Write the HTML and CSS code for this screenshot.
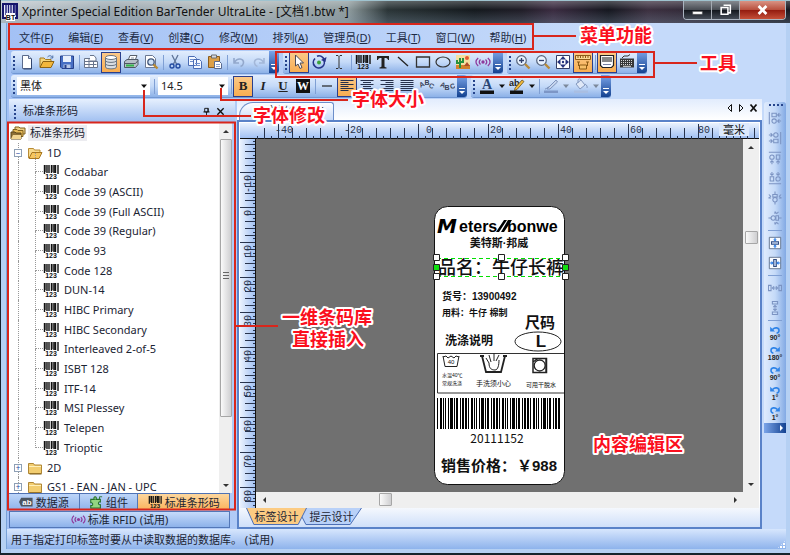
FILE: index.html
```html
<!DOCTYPE html>
<html lang="zh-CN">
<head>
<meta charset="utf-8">
<title>Xprinter Special Edition BarTender UltraLite</title>
<link rel="stylesheet" href="styles.css">
</head>
<body>
<svg class="defs" aria-hidden="true">
  <defs>
    <symbol id="barcode" viewBox="0 0 16 16"><path d="M1.500 1v9M4 1v8M6 1v8M8.500 1v8M11 1v8M12.500 1v8M15 1v9" stroke="#111" stroke-width="1.400"/><path d="M2.700 1v7M9.800 1v7" stroke="#111" stroke-width=".7"/><text x="8" y="15" text-anchor="middle" class="digits">123</text></symbol>
    <symbol id="new" viewBox="0 0 16 16"><path d="M3.500 1.500h6l3 3v10h-9z" fill="#fff" stroke="#5a6a8c"/><path d="M9.500 1.500v3h3" fill="#cfdcf2" stroke="#5a6a8c"/><path d="M12.500 5v10h-8" fill="none" stroke="#31456e"/></symbol>
    <symbol id="open" viewBox="0 0 16 16"><path d="M1 13V4h4l1.500 1.500H12V8" fill="#f6d67c" stroke="#a67a1c"/><path d="M1 13.500 4 7.500h11l-3 6z" fill="#f3b73c" stroke="#8d6414"/><path d="M8.500 3c2-2 4-1.500 5 .5m.3-2v2.500h-2.500" fill="none" stroke="#4c6fa8"/></symbol>
    <symbol id="save" viewBox="0 0 16 16"><path d="M1.500 2h13v12.500H3L1.500 13z" fill="#476fc4" stroke="#27408b"/><path d="M4 2h8v6H4z" fill="#e9f0fc"/><path d="M4.500 10.500h7V14h-7z" fill="#b9c8e6"/><path d="M5.500 11h2v3h-2z" fill="#26408a"/></symbol>
    <symbol id="grid" viewBox="0 0 16 16"><path d="M1.500 4.500h9v9h-9zM1.500 7.500h12M1.500 10.500h12M6 4.500v9M10.500 7.500h4v6h-4z" fill="#fff" stroke="#68758c"/><path d="M7 1.500h4l2 2.500v3H7" fill="#fff" stroke="#68758c"/></symbol>
    <symbol id="db" viewBox="0 0 16 16"><path d="M2.500 3.500v9.500c0 2.500 11 2.500 11 0V3.500" fill="#d8dde2" stroke="#697480"/><ellipse cx="8" cy="3.500" rx="5.500" ry="2" fill="#fff" stroke="#697480"/><path d="M2.500 6.500c0 2.500 11 2.500 11 0M2.500 9.700c0 2.500 11 2.500 11 0" fill="none" stroke="#697480"/></symbol>
    <symbol id="print" viewBox="0 0 16 16"><path d="M5 6.500 7 1.500h7l-2 5z" fill="#fff" stroke="#59606b"/><path d="M1.500 7.500 4 5.500h11v5l-2.500 3h-11z" fill="#b9c0ca" stroke="#4f5865"/><path d="M1.500 9.500h11l2.500-3" fill="none" stroke="#4f5865"/><path d="M3 11.500h8" stroke="#33b649" stroke-width="2"/><path d="M8 4h3" stroke="#8a93a1"/></symbol>
    <symbol id="preview" viewBox="0 0 16 16"><path d="M2.500 1.500h7l3 3v9h-10z" fill="#fff" stroke="#6b7892"/><circle cx="8" cy="8" r="3.200" fill="#cfe2f7" stroke="#44587c" stroke-width="1.300"/><path d="m10.500 10.500 4 4" stroke="#b98a33" stroke-width="2.400"/></symbol>
    <symbol id="cut" viewBox="0 0 16 16"><path d="m5 1 4.500 9M11 1 6.500 10" stroke="#5e7498" stroke-width="1.300"/><circle cx="5" cy="12" r="2" fill="none" stroke="#234ba0" stroke-width="1.400"/><circle cx="11" cy="12" r="2" fill="none" stroke="#234ba0" stroke-width="1.400"/></symbol>
    <symbol id="copy" viewBox="0 0 16 16"><path d="M1.500 2.500h6l2 2v7h-8zM6.500 5.500h6l2 2v7h-8z" fill="#f4f8ff" stroke="#4a6cb4"/><path d="M3 5.500h3M3 7.500h3M8 9.500h5M8 11.500h5" stroke="#6f8fce"/></symbol>
    <symbol id="paste" viewBox="0 0 16 16"><path d="M1.500 2.500h11v11h-11z" fill="#dca048" stroke="#8b5c1c"/><path d="M4.500 1h5v3h-5z" fill="#d6d9df" stroke="#6c6c6c"/><path d="M7.500 7.500h5l2 2v5h-7z" fill="#fff" stroke="#596a90"/><path d="M9 10.500h4M9 12.500h4" stroke="#8ea3cc"/></symbol>
    <symbol id="undo" viewBox="0 0 16 16"><path d="M3 4v5h5M3.500 8.500C6 3.500 13 4 12.500 9c-.3 2-1.500 3-3 3.500" fill="none" stroke="#93a8cc" stroke-width="1.600"/></symbol>
    <symbol id="redo" viewBox="0 0 16 16"><path d="M13 4v5H8M12.500 8.500C10 3.500 3 4 3.500 9c.3 2 1.500 3 3 3.500" fill="none" stroke="#a3b7d8" stroke-width="1.600"/></symbol>
    <symbol id="arrow" viewBox="0 0 16 16"><path d="m4.500 1 8 8H9l2 4.500-2 1L7 10l-2.500 2z" fill="#fff" stroke="#4b4b57"/></symbol>
    <symbol id="rotate" viewBox="0 0 16 16"><path d="M4 4.500A5.500 5.500 0 1 0 12.500 5.500" fill="none" stroke="#26358b" stroke-width="1.700"/><path d="M6 2.200C9 .8 12 3 13.500 6" fill="none" stroke="#26358b" stroke-width="1.700"/><path d="m15.500 3-1 5-4.500-2z" fill="#26358b"/><circle cx="8" cy="8.500" r="2" fill="#3aa33c"/></symbol>
    <symbol id="ibeam" viewBox="0 0 16 16"><path d="M5 1.500h2l1 1 1-1h2M8 2.500v11M5 14.500h2l1-1 1 1h2" fill="none" stroke="#333"/></symbol>
    <symbol id="text" viewBox="0 0 16 16"><path d="M2 2h12v4h-1c-.4-1.600-1-2-3.500-2V12c0 1 .5 1.300 2 1.500v1h-7v-1c1.500-.2 2-.5 2-1.500V4C4 4 3.400 4.400 3 6H2z" fill="#222"/></symbol>
    <symbol id="line" viewBox="0 0 16 16"><path d="m3 3 10 9" stroke="#222" stroke-width="1.300"/></symbol>
    <symbol id="rect" viewBox="0 0 16 16"><path d="M1.500 3h13v10h-13z" fill="none" stroke="#333" stroke-width="1.300"/></symbol>
    <symbol id="ellipse" viewBox="0 0 16 16"><ellipse cx="8" cy="8" rx="7" ry="5" fill="none" stroke="#333" stroke-width="1.200"/></symbol>
    <symbol id="picture" viewBox="0 0 16 16"><path d="M1 1h14v14H1z" fill="#f6dfa0"/><path d="M1 11h14v4H1z" fill="#d4812d"/><path d="M5 14V4M2 6v3h3M8 4v4H5" stroke="#28913e" stroke-width="2" fill="none"/><path d="m9 12 3-4 3 4z" fill="#b14b28"/><circle cx="12" cy="4" r="2" fill="#e65a30"/></symbol>
    <symbol id="rfid" viewBox="0 0 16 16"><circle cx="8" cy="8" r="1.700" fill="#8e3a9d"/><path d="M5.500 5.500c-1.500 1.500-1.500 3.500 0 5M3.200 4c-3 2.500-3 5.500 0 8M10.500 5.500c1.500 1.500 1.500 3.500 0 5M12.800 4c3 2.500 3 5.500 0 8" fill="none" stroke="#8e3a9d" stroke-width="1.300"/></symbol>
    <symbol id="zoomin" viewBox="0 0 16 16"><circle cx="6.500" cy="6.500" r="4.800" fill="#eaf3ff" stroke="#56647c" stroke-width="1.200"/><path d="m10 10 4.500 4.500" stroke="#b88a39" stroke-width="2.400"/><path d="M4 6.500h5M6.500 4v5" stroke="#31406b" stroke-width="1.300"/></symbol>
    <symbol id="zoomout" viewBox="0 0 16 16"><circle cx="6.500" cy="6.500" r="4.800" fill="#eaf3ff" stroke="#56647c" stroke-width="1.200"/><path d="m10 10 4.500 4.500" stroke="#b88a39" stroke-width="2.400"/><path d="M4 6.500h5" stroke="#31406b" stroke-width="1.300"/></symbol>
    <symbol id="fit" viewBox="0 0 16 16"><path d="M1.500 1.500h13v13h-13z" fill="#fff" stroke="#333d66"/><path d="m8 2 3 3.500H5zM8 14l3-3.500H5zM2 8l3.500-3v6zM14 8l-3.500-3v6z" fill="#27357d"/><circle cx="8" cy="8" r="1.200" fill="#27357d"/></symbol>
    <symbol id="ruler" viewBox="0 0 16 16"><path d="M.5 1.500h15v4H.5z" fill="#fbd894" stroke="#8c5a15"/><path d="M3 2v2M5.500 2v2M8 2v2M10.500 2v2M13 2v2" stroke="#8c5a15"/><path d="M3.500 8v4M12.500 8v4M2 8h3M11 8h3" stroke="#8c5a15"/><path d="M4.500 11h7v4h-7z" fill="#f6bf69" stroke="#8c5a15"/></symbol>
    <symbol id="screen" viewBox="0 0 16 16"><path d="M1.500 1.500h13v10l-2 2h-9l-2-2z" fill="#fff" stroke="#222" stroke-width="1.200"/><path d="M4 3v5M6 3v5M8 3v5M10 3v5M12 3v5" stroke="#111"/><path d="M4 10.500h8" stroke="#7781a3"/></symbol>
    <symbol id="keyboard" viewBox="0 0 16 16"><path d="m3 4 2-2h4l2-1.500" fill="none" stroke="#333"/><path d="M1 4.500h14v9H1z" fill="#383838"/><path d="M2 6.500h12M2 8.500h12M2 10.500h12" stroke="#d8d8d8" stroke-dasharray="1 1"/><path d="M4 12.300h8" stroke="#ddd"/></symbol>
    <symbol id="dash" viewBox="0 0 16 16"><path d="M3 8h10" stroke="#222" stroke-width="1.200"/></symbol>
    <symbol id="left" viewBox="0 0 16 16"><path d="M1.500 2.500h13M1.500 4.500h8M1.500 6.500h13M1.500 8.500h8M1.500 10.500h13M1.500 12.500h8" stroke="#26314c"/></symbol>
    <symbol id="center" viewBox="0 0 16 16"><path d="M1.500 2.500h13M4 4.500h8M1.500 6.500h13M4 8.500h8M1.500 10.500h13M4 12.500h8" stroke="#26314c"/></symbol>
    <symbol id="right" viewBox="0 0 16 16"><path d="M1.500 2.500h13M6.500 4.500h8M1.500 6.500h13M6.500 8.500h8M1.500 10.500h13M6.500 12.500h8" stroke="#26314c"/></symbol>
    <symbol id="justify" viewBox="0 0 16 16"><path d="M1.500 2.500h13M1.500 4.500h13M1.500 6.500h13M1.500 8.500h13M1.500 10.500h13M1.500 12.500h13" stroke="#26314c"/></symbol>
    <symbol id="arcup" viewBox="0 0 16 16"><text x="1" y="9" transform="rotate(-25 3 8)" class="arc">A</text><text x="5.500" y="7" class="arc">B</text><text x="10" y="10" transform="rotate(25 12 8)" class="arc">C</text></symbol>
    <symbol id="arcdown" viewBox="0 0 16 16"><text x="1" y="9" transform="rotate(20 3 8)" class="arc">A</text><text x="5.500" y="12" class="arc">B</text><text x="11" y="11" transform="rotate(-20 12 8)" class="arc">C</text></symbol>
    <symbol id="fontcolor" viewBox="0 0 16 16"><text x="8" y="11" text-anchor="middle" class="letter">A</text><path d="M1 12.500h14V16H1z" fill="#111"/></symbol>
    <symbol id="highlight" viewBox="0 0 16 16"><text x="0" y="8" class="abc">ab</text><path d="m6 10 7-8 2 1.500-7 8-2.500 1z" fill="#f3bb3c" stroke="#6b5320" stroke-width=".8"/><path d="M1 12.500h13V16H1z" fill="#111"/></symbol>
    <symbol id="linecolor" viewBox="0 0 16 16"><path d="M4 11 13 2l1.500 2L7 11z" fill="#c8d6ee" stroke="#7e94bd"/><path d="M2 11c2 0 2-2 4-2" stroke="#7e94bd" fill="none"/><path d="M1 12.500h14V15H1z" fill="#7d96c6"/></symbol>
    <symbol id="fill" viewBox="0 0 16 16"><path d="m3 6 5-4 4 5-5 4z" fill="#dfe8f7" stroke="#8398bf"/><path d="M5 5V2c0-1.500 3-1.500 3 0M12 6c2 1 2.500 3 2 4" fill="none" stroke="#8398bf"/><path d="M1 12.500h14V15H1z" fill="#a9bee2"/></symbol>
    <symbol id="folders" viewBox="0 0 16 16"><path d="M5 2h4l1 1h5v6H5z" fill="#eed086" stroke="#80611e"/><path d="M3 4.500h4l1 1h5v6H3z" fill="#e5b957" stroke="#80611e"/><path d="M1 7h4l1 1h5v6H1z" fill="#8d6f36" stroke="#5f4719"/><path d="m1 14 2-4h8v4z" fill="#f2d592"/></symbol>
    <symbol id="fopen" viewBox="0 0 16 16"><path d="M1.500 13V3.500h5l1 1.500H13v3" fill="#f7da8d" stroke="#b98b34"/><path d="m2 13.500 3-6h10l-3 6z" fill="#f6c65e" stroke="#a87820"/></symbol>
    <symbol id="folder" viewBox="0 0 16 16"><path d="M1.500 13.500v-10h5l1 1.500h7v8.500z" fill="#f2cd70" stroke="#b08735"/><path d="M2 6.500h12" stroke="#fff0ba"/><path d="M2.500 14h12" stroke="#7e5e1d"/></symbol>
    <symbol id="source" viewBox="0 0 16 16"><path d="M0 8 2.500 3h13v10h-13z" fill="#4b5560"/><text x="9" y="11" text-anchor="middle" class="ab">ab</text></symbol>
    <symbol id="component" viewBox="0 0 16 16"><path d="M2 5h4c-2-4 4-4 2 0h5v3c-3-1-3 4 0 3v4H2v-3c3 1 3-4 0-3z" fill="#93d580" stroke="#25702c" stroke-width="1.200"/><path d="M12 5V2h3" fill="none" stroke="#25702c"/></symbol>
    <symbol id="al" viewBox="0 0 16 16"><path d="M1.500 1v14M4.500 2.500h5v4h-5zM11 4.500h4m-2-2-2 2 2 2M11 11.500h4m-2-2-2 2 2 2" fill="none" stroke="#7b93c2" stroke-width="1.200"/><circle cx="7" cy="11.500" r="2.500" fill="none" stroke="#7b93c2" stroke-width="1.200"/></symbol>
    <symbol id="cross" viewBox="0 0 16 16"><path d="M8 .5v3M8 12.500v3M.5 8h3M12.500 8h3M5.500 4h5v3h-5z" fill="none" stroke="#7b93c2" stroke-width="1.200"/><circle cx="8" cy="10" r="2.500" fill="none" stroke="#7b93c2" stroke-width="1.200"/><path d="m1 4 2 2-2 2M15 4l-2 2 2 2" fill="none" stroke="#7b93c2" stroke-width="1.200"/></symbol>
    <symbol id="pagev" viewBox="0 0 16 16"><path d="M1.500 1.500h13v13h-13z" fill="#f8fbff" stroke="#596b87"/><path d="M4 6.500h8v3H4z" fill="#bed0ed" stroke="#334e82" stroke-width="1.200"/><path d="M8 2v3M8 11v3M6.500 4 8 5.500 9.500 4M6.500 12 8 10.500 9.500 12" fill="none" stroke="#267be8" stroke-width="1.200"/></symbol>
    <symbol id="dist" viewBox="0 0 16 16"><path d="M.5 5h3v6h-3zM12.500 5h3v6h-3zM5 8h6M7 6 5 8l2 2M9 6l2 2-2 2" fill="none" stroke="#7b93c2" stroke-width="1.200"/></symbol>
    <symbol id="ccw" viewBox="0 0 14 10"><path d="M1 1v6h6z" fill="#2e83e8"/><path d="M4 4.500C7 1 12 2 12 5.500c0 1.500-1 3-3 3.500" fill="none" stroke="#2e83e8" stroke-width="2"/></symbol>
    <symbol id="triangle" viewBox="0 0 8 8"><path d="M1 2.500h6L4 6z" fill="#111"/></symbol>
    <pattern id="hr" x="178" y="0" width="70" height="16" patternUnits="userSpaceOnUse"><path d="M.5 1v15M14.500 5v11M28.500 5v11M42.500 5v11M56.500 5v11M7.500 13v3M21.500 13v3M35.500 13v3M49.500 13v3M63.500 13v3" stroke="#27334d"/></pattern>
    <pattern id="vr" x="0" y="33" width="16" height="35" patternUnits="userSpaceOnUse"><path d="M0 .5h16M5 7.500h11M5 14.500h11M5 21.500h11M5 28.500h11M13 4.500h3M13 11.500h3M13 18.500h3M13 25.500h3M13 31.500h3" stroke="#27334d"/></pattern>
    <pattern id="bars" width="31" height="31" patternUnits="userSpaceOnUse"><path d="M0 0h2v31H0zM3 0h1v31H3zM6 0h2v31H6zM9 0h1v31H9zM11 0h1v31h-1zM14 0h1v31h-1zM16 0h3v31h-3zM20 0h1v31h-1zM22 0h2v31h-2zM26 0h1v31h-1zM28 0h2v31h-2z"/></pattern>
  </defs>
</svg>

<div class="window">
  <header class="titlebar">
    <svg class="applogo" viewBox="0 0 16 18"><path d="M1 1h14v14H1z" fill="#eef0ff" stroke="#15156b" stroke-width="2"/><path d="M4 2v10M6.500 2v8M9 2v10M11.500 2v8M13 2v10" stroke="#1b1b76" stroke-width="1.400"/><path d="M4 10h9v8H4z" fill="#fff"/><text x="8.500" y="17" text-anchor="middle" class="digits">BT</text></svg>
    <h1>Xprinter Special Edition BarTender UltraLite - [文档1.btw *]</h1>
    <div class="winbtns">
      <button aria-label="最小化"><svg viewBox="0 0 28 18"><path d="M9 10.500h10v3H9z" fill="#fff" stroke="#555" stroke-width=".5"/></svg></button>
      <button aria-label="还原"><svg viewBox="0 0 28 18"><path d="M12 4h7v8h-2M9.500 6.500h7v7h-7z" fill="none" stroke="#fff" stroke-width="1.600"/></svg></button>
      <button class="close" aria-label="关闭"><svg viewBox="0 0 46 18"><path d="m19 5 8 8m0-8-8 8" stroke="#fff" stroke-width="2.800"/></svg></button>
    </div>
  </header>

  <div class="frame">
    <nav class="menu">
      <a href="#">文件(<u>F</u>)</a><a href="#">编辑(<u>E</u>)</a><a href="#">查看(<u>V</u>)</a><a href="#">创建(<u>C</u>)</a><a href="#">修改(<u>M</u>)</a><a href="#">排列(<u>A</u>)</a><a href="#">管理员(<u>D</u>)</a><a href="#">工具(<u>T</u>)</a><a href="#">窗口(<u>W</u>)</a><a href="#">帮助(<u>H</u>)</a>
    </nav>

    <div class="barrow">
      <div class="bar"><i class="grip"></i>
        <button class="tb" aria-label="新建"><svg><use href="#new"/></svg></button><button class="tb" aria-label="打开"><svg><use href="#open"/></svg></button><button class="tb" aria-label="保存"><svg><use href="#save"/></svg></button><i class="sep"></i>
        <button class="tb" aria-label="页面设置"><svg><use href="#grid"/></svg></button><button class="tb on" aria-label="数据库"><svg><use href="#db"/></svg></button><button class="tb" aria-label="打印"><svg><use href="#print"/></svg></button><button class="tb" aria-label="预览"><svg><use href="#preview"/></svg></button><i class="sep"></i>
        <button class="tb" aria-label="剪切"><svg><use href="#cut"/></svg></button><button class="tb" aria-label="复制"><svg><use href="#copy"/></svg></button><button class="tb" aria-label="粘贴"><svg><use href="#paste"/></svg></button><i class="sep"></i>
        <button class="tb" aria-label="撤消"><svg><use href="#undo"/></svg></button><button class="tb" aria-label="重做"><svg><use href="#redo"/></svg></button><i class="more"></i>
      </div>
      <div class="bar"><i class="grip"></i>
        <button class="tb on" aria-label="选择"><svg><use href="#arrow"/></svg></button><button class="tb" aria-label="旋转"><svg><use href="#rotate"/></svg></button><button class="tb" aria-label="文本光标"><svg><use href="#ibeam"/></svg></button><i class="sep"></i>
        <button class="tb" aria-label="条形码"><svg><use href="#barcode"/></svg></button><button class="tb" aria-label="文本"><svg><use href="#text"/></svg></button><button class="tb" aria-label="线条"><svg><use href="#line"/></svg></button><button class="tb" aria-label="矩形"><svg><use href="#rect"/></svg></button><button class="tb" aria-label="椭圆"><svg><use href="#ellipse"/></svg></button><button class="tb" aria-label="图片"><svg><use href="#picture"/></svg></button><button class="tb" aria-label="RFID"><svg><use href="#rfid"/></svg></button><i class="more"></i>
      </div>
      <div class="bar"><i class="grip"></i>
        <button class="tb" aria-label="放大"><svg><use href="#zoomin"/></svg></button><button class="tb" aria-label="缩小"><svg><use href="#zoomout"/></svg></button><button class="tb" aria-label="适合窗口"><svg><use href="#fit"/></svg></button><button class="tb on" aria-label="标尺"><svg><use href="#ruler"/></svg></button><i class="sep"></i>
        <button class="tb on" aria-label="屏幕数据"><svg><use href="#screen"/></svg></button><button class="tb" aria-label="键盘"><svg><use href="#keyboard"/></svg></button><i class="more"></i>
      </div>
    </div>

    <div class="barrow">
      <div class="bar"><i class="grip"></i>
        <label class="combo font"><select aria-label="字体"><option>黑体</option></select><svg><use href="#triangle"/></svg></label><i class="sep"></i>
        <label class="combo size"><select aria-label="字号"><option>14.5</option></select><svg><use href="#triangle"/></svg></label><i class="sep"></i>
        <button class="tb on fmt"><b>B</b></button><button class="tb fmt"><em>I</em></button><button class="tb fmt"><u>U</u></button><button class="tb fmt"><span class="inv">W</span></button><i class="sep"></i>
        <button class="tb" aria-label="横线"><svg><use href="#dash"/></svg></button><button class="tb on" aria-label="左对齐"><svg><use href="#left"/></svg></button><button class="tb" aria-label="居中"><svg><use href="#center"/></svg></button><button class="tb" aria-label="右对齐"><svg><use href="#right"/></svg></button><button class="tb" aria-label="两端对齐"><svg><use href="#justify"/></svg></button><button class="tb" aria-label="上弧文字"><svg><use href="#arcup"/></svg></button><button class="tb" aria-label="下弧文字"><svg><use href="#arcdown"/></svg></button><i class="more"></i>
      </div>
      <div class="bar"><i class="grip"></i>
        <button class="tb" aria-label="字体颜色"><svg><use href="#fontcolor"/></svg></button><button class="dd" aria-label="更多字体颜色"><svg><use href="#triangle"/></svg></button>
        <button class="tb" aria-label="突出显示"><svg><use href="#highlight"/></svg></button><button class="dd" aria-label="更多突出颜色"><svg><use href="#triangle"/></svg></button><i class="sep"></i>
        <button class="tb" aria-label="线条颜色"><svg><use href="#linecolor"/></svg></button><button class="dd off" aria-label="更多线条颜色"><svg><use href="#triangle"/></svg></button>
        <button class="tb" aria-label="填充颜色"><svg><use href="#fill"/></svg></button><button class="dd off" aria-label="更多填充颜色"><svg><use href="#triangle"/></svg></button><i class="more"></i>
      </div>
    </div>

    <main class="work">
      <aside class="side">
        <div class="sidehead"><i class="grip"></i><h2>标准条形码</h2>
          <svg class="pin" viewBox="0 0 10 10"><path d="M3 1.500h4v4H3zM1.500 5.500h7M5 5.500V10M6.500 1.500v4" fill="none" stroke="#111"/></svg>
          <svg class="x" viewBox="0 0 10 10"><path d="m1.500 1.500 7 7m0-7-7 7" stroke="#111" stroke-width="1.500"/></svg>
        </div>
        <div class="treebox">
          <ul class="tree">
            <li class="root"><svg><use href="#folders"/></svg><span>标准条形码</span></li>
            <li class="group"><i class="pm">−</i><svg><use href="#fopen"/></svg><span>1D</span></li>
            <li class="leaf"><svg><use href="#barcode"/></svg><span>Codabar</span></li>
            <li class="leaf"><svg><use href="#barcode"/></svg><span>Code 39 (ASCII)</span></li>
            <li class="leaf"><svg><use href="#barcode"/></svg><span>Code 39 (Full ASCII)</span></li>
            <li class="leaf"><svg><use href="#barcode"/></svg><span>Code 39 (Regular)</span></li>
            <li class="leaf"><svg><use href="#barcode"/></svg><span>Code 93</span></li>
            <li class="leaf"><svg><use href="#barcode"/></svg><span>Code 128</span></li>
            <li class="leaf"><svg><use href="#barcode"/></svg><span>DUN-14</span></li>
            <li class="leaf"><svg><use href="#barcode"/></svg><span>HIBC Primary</span></li>
            <li class="leaf"><svg><use href="#barcode"/></svg><span>HIBC Secondary</span></li>
            <li class="leaf"><svg><use href="#barcode"/></svg><span>Interleaved 2-of-5</span></li>
            <li class="leaf"><svg><use href="#barcode"/></svg><span>ISBT 128</span></li>
            <li class="leaf"><svg><use href="#barcode"/></svg><span>ITF-14</span></li>
            <li class="leaf"><svg><use href="#barcode"/></svg><span>MSI Plessey</span></li>
            <li class="leaf"><svg><use href="#barcode"/></svg><span>Telepen</span></li>
            <li class="leaf"><svg><use href="#barcode"/></svg><span>Trioptic</span></li>
            <li class="group"><i class="pm">+</i><svg><use href="#folder"/></svg><span>2D</span></li>
            <li class="group"><i class="pm">+</i><svg><use href="#folder"/></svg><span>GS1 - EAN - JAN - UPC</span></li>
          </ul>
          <div class="vscroll treescroll"><i class="ar up"></i><i class="thumb"></i><i class="ar down"></i></div>
        </div>
        <div class="sidetabs">
          <button><svg><use href="#source"/></svg>数据源</button><button><svg><use href="#component"/></svg>组件</button><button class="cur"><svg><use href="#barcode"/></svg>标准条形码</button>
        </div>
        <button class="rfid"><svg><use href="#rfid"/></svg>标准 RFID (试用)</button>
      </aside>

      <section class="docs">
        <div class="doctabs">
          <div class="doctab"><span>文档1.btw *</span></div>
          <svg class="docnav" viewBox="0 0 32 10"><path d="M5.500 1.500v7L2 5z" fill="none" stroke="#111"/><path d="M13.500 1.500v7L17 5z" fill="none" stroke="#111"/><path d="m24.500 1.500 6 7m0-7-6 7" stroke="#111" stroke-width="1.800"/></svg>
        </div>
        <div class="doc">
          <div class="hruler">
            <svg><rect x="16" width="100%" height="16" fill="url(#hr)"/><text x="53" y="10" text-anchor="end">-40</text><text x="122" y="10" text-anchor="end">-20</text><text x="192" y="10" text-anchor="end">0</text><text x="262" y="10" text-anchor="end">20</text><text x="332" y="10" text-anchor="end">40</text><text x="402" y="10" text-anchor="end">60</text><text x="470" y="10" text-anchor="end">80</text></svg>
            <span>毫米</span>
          </div>
          <div class="docmid">
            <div class="vruler"><svg><rect width="16" height="100%" fill="url(#vr)"/><g text-anchor="end"><text transform="translate(11 36) rotate(-90)">-10</text><text transform="translate(11 71) rotate(-90)">0</text><text transform="translate(11 106) rotate(-90)">10</text><text transform="translate(11 141) rotate(-90)">20</text><text transform="translate(11 176) rotate(-90)">30</text><text transform="translate(11 211) rotate(-90)">40</text><text transform="translate(11 246) rotate(-90)">50</text><text transform="translate(11 281) rotate(-90)">60</text><text transform="translate(11 316) rotate(-90)">70</text><text transform="translate(11 351) rotate(-90)">80</text></g></svg></div>
            <div class="view">
              <div class="canvas">
                <svg class="label" viewBox="430 204 142 284">
                  <rect x="434.500" y="206.500" width="130" height="278" rx="13" fill="#fff" stroke="#111"/>
                  <g class="logo"><text x="437" y="233" class="m">M</text><text x="459" y="232">eters</text><path d="m496 232 8-12h3l-8 12zM501 232l7-12h4l-8 12z"/><text x="507" y="232">bonwe</text></g>
                  <text x="499" y="247" text-anchor="middle" class="t11 bold">美特斯·邦威</text>
                  <text x="438" y="274" class="t17">品名：牛仔长裤</text>
                  <text x="442" y="300" class="t10 bold">货号：13900492</text>
                  <text x="442" y="316" class="t9 bold">用料：牛仔 棉制</text>
                  <text x="525" y="328" class="t15">尺码</text>
                  <text x="445" y="345" class="t12 bold">洗涤说明</text>
                  <ellipse cx="538" cy="341.500" rx="23" ry="9.500" fill="none" stroke="#222"/>
                  <text x="541" y="347" text-anchor="middle" class="el">L</text>
                  <path d="M564 353.500H437.500v39.500H564" fill="none" stroke="#333"/>
                  <g fill="none" stroke="#222"><path d="m443 356 2 10.500h12l2-10.500M443 357l3-1 2 2 3-2 3 2 2-2 3 1"/><path d="m482 356 4 16h15l4-16M480 356h4M503 356h4" stroke-width="1.800"/><path d="M489 363l-3-5m5 4-2-7m5 6v-8m2 8 3-6m-10 8c0 6 3 7 6 7s4-5 4-10"/><path d="M533 358.500h13.500v14H533zM533 362l5-3.500m8 0V372" stroke-width="1.500"/><circle cx="539.700" cy="365.500" r="5.500" stroke-width="1.300"/></g>
                  <text x="451" y="364" text-anchor="middle" class="t6">40</text>
                  <text x="442" y="377" class="t5">水温40℃</text><text x="442" y="385" class="t5">常规洗涤</text>
                  <text x="476" y="386" class="t7">手洗须小心</text><text x="526" y="387" class="t6">可甩干脱水</text>
                  <rect x="436" y="398" width="124" height="31" fill="url(#bars)"/>
                  <text x="497" y="443" text-anchor="middle" class="num">20111152</text>
                  <text x="441" y="471" class="t14 bold">销售价格：</text><text x="517" y="471" class="t14 bold">￥</text><text x="532" y="471" class="t14 bold">988</text>
                  <g fill="none" stroke="#00e000" stroke-dasharray="4 3"><path d="M437 258.500h129M437 276.500h129"/></g>
                  <g fill="#fff" stroke="#222"><path d="M433.500 254.500h6v6h-6zM498.500 254.500h6v6h-6zM562.500 254.500h6v6h-6zM433.500 273.500h6v6h-6zM498.500 273.500h6v6h-6zM562.500 273.500h6v6h-6z"/><path d="M433.500 264.500h6v6h-6zM562.500 264.500h6v6h-6z" fill="#10e010"/></g>
                </svg>
              </div>
              <div class="hscroll"><i class="ar lt"></i><i class="thumb"></i><i class="ar rt"></i></div>
            </div>
            <div class="vscroll docscroll"><i class="ar up"></i><i class="thumb"></i><i class="ar down"></i></div>
          </div>
          <div class="pages"><button class="page cur"><svg viewBox="0 0 62 17" preserveAspectRatio="none"><path d="M.5 0 8 16.500h45L61.500 0" /></svg><span>标签设计</span></button><button class="page"><svg viewBox="0 0 62 17" preserveAspectRatio="none"><path d="M5 0 .5 8 5 16.500h45L61.500 0" /></svg><span>提示设计</span></button></div>
        </div>
      </section>

      <div class="dock">
        <div class="vbar"><i class="hgrip"></i>
          <button class="vb" aria-label="左对齐对象"><svg><use href="#al"/></svg></button>
          <button class="vb" aria-label="右对齐对象"><svg class="r180"><use href="#al"/></svg></button>
          <button class="vb" aria-label="顶对齐对象"><svg class="r90"><use href="#al"/></svg></button>
          <button class="vb" aria-label="底对齐对象"><svg class="r270"><use href="#al"/></svg></button>
          <button class="vb" aria-label="垂直居中"><svg><use href="#cross"/></svg></button>
          <button class="vb" aria-label="水平居中"><svg class="r90"><use href="#cross"/></svg></button><i class="hsep"></i>
          <button class="vb" aria-label="页面垂直居中"><svg><use href="#pagev"/></svg></button>
          <button class="vb" aria-label="页面水平居中"><svg class="r90"><use href="#pagev"/></svg></button><i class="hsep"></i>
          <button class="vb" aria-label="水平分布"><svg><use href="#dist"/></svg></button>
          <button class="vb" aria-label="垂直分布"><svg class="r90"><use href="#dist"/></svg></button><i class="hsep"></i>
          <button class="rot"><svg><use href="#ccw"/></svg>90°</button>
          <button class="rot"><svg class="flip"><use href="#ccw"/></svg>180°</button>
          <button class="rot"><svg class="flip"><use href="#ccw"/></svg>90°</button>
          <button class="rot"><svg><use href="#ccw"/></svg>1°</button>
          <button class="rot"><svg class="flip"><use href="#ccw"/></svg>1°</button>
          <i class="vmore"></i>
        </div>
      </div>
    </main>

    <footer class="status"><span>用于指定打印标签时要从中读取数据的数据库。 (试用)</span><i class="size-grip"></i></footer>
  </div>

  <svg class="notes">
    <g fill="none" stroke="#d8261c" stroke-width="2">
      <path d="M9 24h524v25H9zM533 36h43M276 52h378v25H276zM654 63h43M144 90v26h107M221 88v12h127M8 122.500h227v387H8zM235 326h43"/>
    </g>
    <g class="notetext">
      <text x="580" y="42">菜单功能</text><text x="700" y="70">工具</text><text x="352" y="106">字体大小</text><text x="253" y="122">字体修改</text><text x="282" y="324">一维条码库</text><text x="292" y="346">直接插入</text><text x="593" y="451">内容编辑区</text>
    </g>
  </svg>
</div>
</body>
</html>
```
FILE: styles.css
```css
* { box-sizing: border-box; }
html, body { margin: 0; height: 100%; }
body {
  font: 11px/16px "Noto Sans", "Noto Sans CJK SC", sans-serif;
  color: #1b2433;
  overflow: hidden;
}
button { font: inherit; color: inherit; padding: 0; margin: 0; border: 0; background: none; }
svg { display: block; flex: none; }
i { display: block; font-style: normal; flex: none; }
h1, h2 { margin: 0; font: inherit; }
.defs { position: absolute; width: 0; height: 0; }
.digits { font: bold 7px "Liberation Sans", sans-serif; fill: #111; }
.arc { font: bold 7px "Liberation Sans", sans-serif; fill: #3a4358; }
.letter { font: bold 14px "Liberation Serif", serif; fill: #2a4674; }
.abc { font: bold 9px "Liberation Sans", sans-serif; fill: #222; }
.ab { font: bold 9px "Liberation Sans", sans-serif; fill: #fff; }

.window {
  position: relative;
  display: flex;
  flex-direction: column;
  height: 100vh;
  border-left: 1px solid #16202c;
  border-bottom: 2px solid #16242c;
  background: #b5d0f3;
}

/* title bar */
.titlebar {
  display: flex;
  align-items: center;
  gap: 4px;
  height: 23px;
  flex: none;
  padding-left: 1px;
  border-top: 1px solid #9fc3cf;
  background:
    linear-gradient(rgba(255,255,255,.25), rgba(0,0,0,0) 40%, rgba(120,140,160,.35)),
    linear-gradient(90deg, #c2cbd0, #9eaab2 14%, #b1b9bb 30%, #8f9c9e 44%, #2a3436 49%, #14191d 60%, #201d27 66%, #3a2b40 70%, #15171f 77%, #3c3040 82%, #16171f 100%);
}
.titlebar h1 { flex: 1; font-size: 12px; line-height: 20px; color: #111; white-space: nowrap; }
.applogo { width: 16px; height: 18px; }
.winbtns { display: flex; align-self: flex-start; margin-right: 4px; border: 1px solid #aab4c0; border-top: 0; border-radius: 0 0 4px 4px; overflow: hidden; }
.winbtns button { width: 28px; height: 18px; border-right: 1px solid #a4aab2; background: linear-gradient(#85898f, #494d54 48%, #14181e 52%, #454c57); }
.winbtns svg { width: 100%; height: 18px; }
.winbtns .close { width: 45px; border-right: 0; background: linear-gradient(#d99384, #b9503e 48%, #941c10 52%, #c54f38); }

.frame {
  flex: 1;
  min-height: 0;
  display: flex;
  flex-direction: column;
  margin: 0 4px 4px 5px;
  border-left: 1px solid #7aa3d8;
  background: linear-gradient(90deg, #a3c1f5, #c5dafa 75%);
}

/* menu and toolbars */
.menu { display: flex; align-items: center; gap: 15px; height: 28px; flex: none; padding: 2px 0 0 12px; }
.menu a { color: #1c2a44; text-decoration: none; white-space: nowrap; }
.barrow { display: flex; gap: 4px; margin-bottom: 2px; padding-left: 4px; flex: none; }
.bar { display: flex; align-items: center; height: 22px; border-radius: 3px; background: linear-gradient(#e2edfd, #c5daf8 50%, #8cb1e8); box-shadow: 0 1px 0 #7197d2; }
.grip { width: 6px; height: 15px; background: radial-gradient(circle at 3px 2px, #26448c 1px, transparent 1.500px) 0 0 / 6px 4px; }
.tb { display: flex; align-items: center; justify-content: center; width: 20px; height: 21px; }
.tb svg { width: 16px; height: 16px; }
.tb.on { border: 1px solid #2b3f8c; background: linear-gradient(#fbc988, #f8ad51); }
.sep { width: 1px; height: 15px; margin: 0 1px 0 2px; background: #7f9fd4; }
.more { position: relative; width: 10px; height: 22px; border-radius: 0 3px 3px 0; background: linear-gradient(#7ba5e9, #134190); }
.more::after { content: ""; position: absolute; left: 2px; bottom: 3px; border: 3px solid transparent; border-top-color: #fff; border-bottom: 0; }
.more::before { content: ""; position: absolute; left: 2px; bottom: 8px; width: 6px; height: 1px; background: #fff; }
.dd { width: 10px; height: 20px; }
.dd svg { width: 8px; height: 8px; margin: 0 auto; }
.off { opacity: .4; }
.combo { display: flex; align-items: center; height: 18px; background: #fff; padding-right: 2px; }
.combo select { flex: 1; min-width: 0; height: 18px; appearance: none; border: 0; padding: 0 3px; background: none; color: #222; font: 11px/16px "Noto Sans", "Noto Sans CJK SC", sans-serif; }
.combo svg { width: 8px; height: 8px; }
.combo.font { width: 133px; margin-right: 2px; }
.combo.size { width: 70px; margin: 0 1px 0 2px; }
.fmt { font: bold 13px/16px "Liberation Serif", serif; color: #222; }
.inv { width: 14px; height: 14px; line-height: 14px; background: #111; color: #fff; font-size: 12px; }

/* work area */
.work { flex: 1; min-height: 0; display: flex; }
.side { width: 230px; flex: none; display: flex; flex-direction: column; padding: 0 7px 0 2px; }
.sidehead { display: flex; align-items: center; height: 24px; flex: none; margin-right: -5px; padding: 0 10px 0 3px; background: linear-gradient(#e6f0fe, #9dbdf0); }
.sidehead h2 { flex: 1; padding-left: 5px; }
.pin, .x { width: 9px; height: 9px; margin-left: 5px; }
.treebox { flex: 1; min-height: 0; display: flex; overflow: hidden; background: #fff; margin-right: -2px; }
.tree { flex: 1; min-width: 0; display: flex; flex-direction: column; list-style: none; margin: 0 0 -4px; padding: 0; font-size: 11px; }
.tree li { position: relative; flex: 1; display: flex; align-items: center; gap: 5px; white-space: nowrap; }
.tree li > svg { width: 16px; height: 16px; }
.tree .root { padding-left: 1px; gap: 2px; }
.root span { background: #ececf0; padding: 0 2px; }
.group { padding-left: 5px; }
.group > svg { margin-left: 1px; }
.tree .group { gap: 4px; }
.pm { width: 8px; height: 8px; border: 1px solid #8e9fb5; line-height: 6px; font-size: 8px; text-align: center; background: #fff; color: #2646a0; z-index: 1; }
.leaf { padding-left: 34px; }
.group::before, .leaf::before { content: ""; position: absolute; left: 9px; top: 0; bottom: 0; border-left: 1px dotted #999; }
.leaf::after { content: ""; position: absolute; left: 26px; top: -50%; bottom: 50%; width: 7px; border: dotted #999; border-width: 0 0 1px 1px; }
.vscroll { display: flex; flex-direction: column; align-items: center; background: #efefef; }
.treescroll { width: 13px; }
.thumb { border: 1px solid #a6a6a6; border-radius: 1px; background: linear-gradient(90deg, #fafafa, #cfcfd1); }
.treescroll .thumb { flex: 0 0 75%; width: 12px; position: relative; }
.treescroll .thumb::after { content: ""; position: absolute; left: 2px; top: 48%; width: 6px; height: 7px; background: repeating-linear-gradient(#666 0 1px, transparent 1px 3px); }
.ar { width: 16px; height: 16px; display: flex; align-items: center; justify-content: center; }
.ar::after { content: ""; border: 3px solid transparent; }
.up::after { border-bottom-color: #333; border-top: 0; }
.down { margin-top: auto; }
.down::after { border-top-color: #333; border-bottom: 0; }
.lt::after { border-right-color: #333; border-left: 0; }
.rt { margin-left: auto; }
.rt::after { border-left-color: #333; border-right: 0; }
.sidetabs { display: flex; flex: none; height: 17px; border-top: 1px solid #4f72b4; background: #fff; }
.sidetabs button { display: flex; align-items: center; justify-content: center; gap: 3px; flex: 70 0 0; border-right: 1px solid #5377b8; background: linear-gradient(#bdd5f9, #8fb3ea); line-height: 15px; white-space: nowrap; }
.sidetabs button:nth-child(2) { flex-grow: 58; }
.sidetabs .cur { flex-grow: 91; background: linear-gradient(#fdd79e, #fbb25c); }
.sidetabs svg { width: 14px; height: 14px; }
.rfid { display: flex; align-items: center; justify-content: center; gap: 2px; flex: none; height: 17px; margin: 1px 0 1px; border: 1px solid #5377b8; background: linear-gradient(#c6dbfb, #8db2ea); line-height: 15px; }
.rfid svg { width: 15px; height: 15px; }

.docs { flex: 1; min-width: 0; display: flex; flex-direction: column; }
.doctabs { display: flex; align-items: flex-end; justify-content: space-between; height: 21px; flex: none; padding: 0 4px 0 2px; background: linear-gradient(#e2ecfd, #fff); }
.doctab { width: 95px; height: 18px; padding-left: 26px; line-height: 16px; overflow: hidden; background: linear-gradient(#fff, #c9dcfa); border: 1px solid #6d8fca; border-bottom: 0; border-radius: 14px 3px 0 0; }
.docnav { width: 32px; height: 10px; margin-bottom: 7px; }
.doc { flex: 1; min-height: 0; display: flex; flex-direction: column; border: 2px solid #5a82c8; padding: 1px 1px 2px; background: linear-gradient(#fff, #fff 94%, #cfdff9); }
.hruler { position: relative; display: flex; flex: none; height: 16px; background: linear-gradient(#eaf2fe, #a2c1f3); border-bottom: 1px solid #111; }
.hruler svg { width: 100%; height: 16px; }
.hruler text, .vruler text { font: 10px "Liberation Mono", monospace; fill: #27334d; }
.hruler span { position: absolute; right: 10px; top: 0; padding: 0 4px; line-height: 13px; color: #111; background: #dce9fd; }
.docmid { flex: 1; min-height: 0; display: flex; background: #efefef; }
.vruler { width: 16px; flex: none; border-right: 1px solid #111; background: linear-gradient(90deg, #eaf2fe, #a2c1f3); overflow: hidden; }
.vruler svg { width: 16px; height: 100%; }
.view { flex: 1; min-width: 0; display: flex; flex-direction: column; }
.canvas { position: relative; flex: 1; min-height: 0; overflow: hidden; background: #707070; }
.hscroll { display: flex; flex: none; height: 16px; background: #efefef; }
.hscroll .thumb { width: 13px; height: 13px; margin: 1px 0 0 22%; }
.docscroll { width: 16px; flex: none; margin-bottom: 16px; }
.docscroll .thumb { width: 13px; height: 13px; margin-top: 76px; }
.pages { display: flex; flex: none; height: 17px; padding-left: 6px; }
.page { position: relative; width: 61px; height: 17px; margin-right: -6px; line-height: 16px; white-space: nowrap; }
.page svg { position: absolute; left: 0; top: 0; width: 100%; height: 17px; fill: #b9d1f8; stroke: #4a6db5; }
.page.cur { z-index: 1; }
.page.cur svg { fill: #fccb82; }
.page span { position: relative; }

/* label on the canvas */
.label { position: absolute; left: 174px; top: 65px; width: 142px; height: 284px; }
.label text { font-family: "Liberation Sans", "Noto Sans CJK SC", sans-serif; fill: #111; }
.label .logo text { font-size: 16px; font-weight: bold; fill: #000; }
.label .logo .m { font: italic bold 20px "DejaVu Sans", sans-serif; }
.label .bold { font-weight: bold; }
.label .t5 { font-size: 5px; }
.label .t6 { font-size: 6px; }
.label .t7 { font-size: 7px; }
.label .t9 { font-size: 9px; }
.label .t10 { font-size: 10px; }
.label .t11 { font-size: 11px; }
.label .t12 { font-size: 12px; }
.label .t14 { font-size: 15px; }
.label .t15 { font-size: 15px; font-weight: bold; }
.label .t17 { font-size: 18px; font-weight: 500; }
.label .el { font-size: 17px; font-weight: bold; }
.label .num { font-family: "Noto Sans CJK SC", sans-serif; font-size: 12px; }

/* right-hand toolbar */
.dock { width: 24px; flex: none; padding: 3px 0 0 2px; }
.vbar { display: flex; flex-direction: column; align-items: center; width: 22px; border-radius: 3px; background: linear-gradient(90deg, #dfebfd, #c5daf8 50%, #82a9e4); }
.hgrip { width: 15px; height: 6px; background: radial-gradient(circle at 2px 3px, #26448c 1px, transparent 1.500px) 0 0 / 4px 6px; }
.vb { height: 20px; }
.vb svg { width: 14px; height: 14px; }
.r90 { transform: rotate(90deg); }
.r180 { transform: rotate(180deg); }
.r270 { transform: rotate(270deg); }
.flip { transform: scaleX(-1); }
.hsep { width: 14px; height: 1px; margin: 2px 0; background: #7f9fd4; }
.rot { height: 20px; font: bold 7px/8px "Liberation Sans", sans-serif; color: #222; }
.rot svg { width: 12px; height: 8px; margin: 1px auto 0; }
.vmore { width: 22px; height: 10px; background: linear-gradient(90deg, #7ba5e9, #134190); position: relative; }
.vmore::after { content: ""; position: absolute; right: 3px; top: 2px; border: 3px solid transparent; border-left-color: #fff; border-right: 0; }

.status { display: flex; justify-content: space-between; flex: none; height: 20px; padding-left: 4px; line-height: 21px; background: linear-gradient(#d7e6fd, #8eb3ec); white-space: nowrap; }
.size-grip { align-self: flex-end; width: 9px; height: 9px; background: radial-gradient(circle at 1px 1px, #fff 1px, transparent 1px) 0 0 / 3px 3px; clip-path: polygon(100% 0, 100% 100%, 0 100%); }

/* callouts drawn over the window */
.notes { position: absolute; left: -1px; top: 0; width: 100%; height: 100%; pointer-events: none; }
.notetext text { font: bold 18px "Noto Sans CJK SC", sans-serif; fill: #fb0f1e; stroke: #fff; stroke-width: 4px; stroke-linejoin: round; paint-order: stroke; }
```
